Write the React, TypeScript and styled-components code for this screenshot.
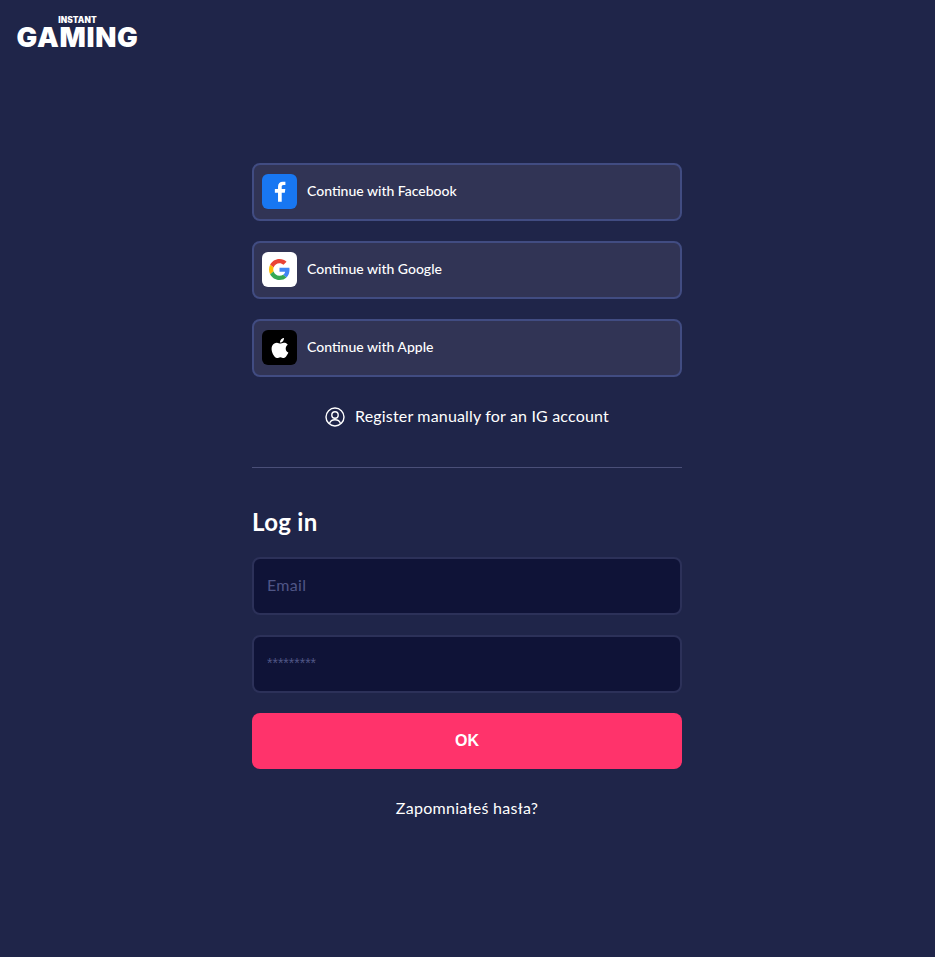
import React from "react";
import styled, { createGlobalStyle } from "styled-components";

const GlobalStyle = createGlobalStyle`
	html, body {
		margin: 0;
		padding: 0;
		background: #1f2549;
	}
	* {
		box-sizing: border-box;
	}
`;

const Page = styled.div`
	width: 100%;
	height: 957px;
	background: #1f2549;
	color: #fff;
	font-family: Lato, "Noto Sans", sans-serif;
	overflow: hidden;
`;

const Logo = styled.div`
	display: flex;
	flex-direction: column;
	align-items: center;
	width: 121px;
	height: 163px;
	margin-left: 17px;
	padding-top: 15px;
	font-family: Inter, sans-serif;
	font-weight: 900;
	color: #fff;
`;

const LogoTop = styled.span`
	font-size: 8.3px;
	line-height: 10px;
	letter-spacing: 0.1px;
`;

const LogoMain = styled.span`
	font-size: 27.5px;
	line-height: 24px;
	letter-spacing: 0.7px;
`;

const Column = styled.main`
	width: 430px;
	margin-left: 252px;
	display: flex;
	flex-direction: column;
`;

const SocialList = styled.div`
	display: flex;
	flex-direction: column;
	gap: 20px;
`;

const SocialButton = styled.button`
	display: flex;
	align-items: center;
	gap: 10px;
	width: 100%;
	height: 58px;
	padding: 0 8px 1px;
	background: #313455;
	border: 2px solid #414c82;
	border-radius: 8px;
	color: #fff;
	font-family: inherit;
	font-size: 14px;
	font-weight: 500;
`;

const SocialLabel = styled.span`
	margin-bottom: 3px;
`;

const IconBox = styled.span<{ $bg: string }>`
	display: flex;
	align-items: center;
	justify-content: center;
	width: 35px;
	height: 35px;
	border-radius: 6px;
	background: ${p => p.$bg};
`;

const RegisterLink = styled.a`
	display: flex;
	align-items: center;
	justify-content: center;
	gap: 10px;
	height: 20px;
	margin-top: 30px;
	font-size: 16px;
	line-height: 20px;
	letter-spacing: 0.17px;
	color: #fff;
`;

const RegisterLabel = styled.span`
	margin-bottom: 2px;
`;

const Divider = styled.hr`
	width: 100%;
	height: 1px;
	margin: 40px 0 0;
	border: none;
	background: #4a4f78;
`;

const Title = styled.h2`
	margin: 39px 0 1px;
	height: 30px;
	font-size: 24px;
	line-height: 30px;
	font-weight: 700;
	letter-spacing: 0.3px;
`;

const Fields = styled.div`
	display: flex;
	flex-direction: column;
	gap: 20px;
	margin-top: 19px;
`;

const Field = styled.input<{ $masked?: boolean }>`
	width: 100%;
	height: 58px;
	padding: 0 13px ${p => (p.$masked ? "3px" : "3px")};
	background: #0f1337;
	border: 2px solid #2c3159;
	border-radius: 8px;
	color: #fff;
	font-family: ${p => (p.$masked ? '"Liberation Sans", sans-serif' : "inherit")};
	font-size: ${p => (p.$masked ? "14px" : "16px")};
	letter-spacing: ${p => (p.$masked ? "0" : "0.3px")};
	outline: none;

	&::placeholder {
		color: #4f5686;
		opacity: 1;
	}
`;

const SubmitButton = styled.button`
	width: 100%;
	height: 56px;
	margin-top: 20px;
	background: #ff336b;
	border: none;
	border-radius: 8px;
	color: #fff;
	font-family: "Liberation Sans", sans-serif;
	font-size: 16px;
	font-weight: 700;
`;

const ForgotLink = styled.a`
	display: block;
	margin-top: 29px;
	text-align: center;
	font-size: 16px;
	line-height: 20px;
	letter-spacing: 0.28px;
	color: #fff;
`;

const FacebookIcon = () => (
	<svg width="12" height="21" viewBox="0 0 14 24" fill="#fff">
		<path d="M9 24V13.500h3.600l.6-4.300H9V6.600c0-1.200.4-2.100 2.100-2.100h2.200V.7C12.900.6 11.600.5 10.200.5 7 .5 4.700 2.400 4.700 6.100v3.100H1v4.300h3.700V24z" />
	</svg>
);

const GoogleIcon = () => (
	<svg width="21" height="21" viewBox="0 0 48 48">
		<path fill="#EA4335" d="M24 9.500c3.500 0 6.700 1.200 9.200 3.600l6.900-6.900C35.900 2.400 30.500 0 24 0 14.600 0 6.500 5.400 2.600 13.200l8 6.200C12.500 13.700 17.800 9.500 24 9.500z" />
		<path fill="#4285F4" d="M46.900 24.500c0-1.600-.1-3.100-.4-4.500H24v9h12.900c-.6 3-2.200 5.500-4.800 7.200l7.700 6c4.500-4.200 7.100-10.300 7.100-17.700z" />
		<path fill="#FBBC05" d="M10.500 28.600c-.5-1.500-.8-3-.8-4.600s.3-3.100.8-4.600l-8-6.200C.9 16.500 0 20.100 0 24s.9 7.500 2.600 10.800z" />
		<path fill="#34A853" d="M24 48c6.500 0 11.900-2.100 15.900-5.800l-7.700-6c-2.100 1.400-4.900 2.300-8.200 2.300-6.300 0-11.500-4.200-13.500-9.900l-8 6.200C6.500 42.600 14.600 48 24 48z" />
	</svg>
);

const AppleIcon = () => (
	<svg width="24" height="24" viewBox="0 0 24 24" fill="#fff">
		<path d="M18.700 19.500c-.8 1.200-1.700 2.500-3 2.500-1.300 0-1.800-.8-3.300-.8-1.500 0-2 .8-3.300.8-1.400.1-2.400-1.300-3.300-2.500C4 17 2.600 12.500 4.500 9.300c.9-1.600 2.600-2.600 4.400-2.600 1.300 0 2.600.9 3.400.9.800 0 2.300-1.100 3.900-.9.700 0 2.500.3 3.600 2-.1.100-2.200 1.300-2.100 3.800 0 3 2.600 4 2.700 4-.1.100-.4 1.400-1.700 3zM13 3.500c.7-.8 1.900-1.500 2.900-1.500.1 1.200-.3 2.300-1 3.200-.7.800-1.800 1.500-2.900 1.400-.1-1.100.4-2.300 1-3.100z" />
	</svg>
);

const UserCircleIcon = () => (
	<svg width="20" height="20" viewBox="0 0 20 20" fill="none" stroke="#fff" strokeWidth="1.400">
		<circle cx="10" cy="10" r="9" />
		<circle cx="10" cy="8" r="3.200" />
		<path d="M4.500 16.500c.8-2.500 3-3.800 5.500-3.800s4.700 1.300 5.500 3.800" />
	</svg>
);

const App = () => (
	<Page>
		<GlobalStyle />
		<Logo>
			<LogoTop>INSTANT</LogoTop>
			<LogoMain>GAMING</LogoMain>
		</Logo>
		<Column>
			<SocialList>
				<SocialButton>
					<IconBox $bg="#1877f2"><FacebookIcon /></IconBox>
					<SocialLabel>Continue with Facebook</SocialLabel>
				</SocialButton>
				<SocialButton>
					<IconBox $bg="#fff"><GoogleIcon /></IconBox>
					<SocialLabel>Continue with Google</SocialLabel>
				</SocialButton>
				<SocialButton>
					<IconBox $bg="#000"><AppleIcon /></IconBox>
					<SocialLabel>Continue with Apple</SocialLabel>
				</SocialButton>
			</SocialList>
			<RegisterLink>
				<UserCircleIcon />
				<RegisterLabel>Register manually for an IG account</RegisterLabel>
			</RegisterLink>
			<Divider />
			<Title>Log in</Title>
			<Fields>
				<Field type="text" placeholder="Email" />
				<Field type="text" $masked placeholder="*********" />
			</Fields>
			<SubmitButton>OK</SubmitButton>
			<ForgotLink>Zapomniałeś hasła?</ForgotLink>
		</Column>
	</Page>
);

export default App;
